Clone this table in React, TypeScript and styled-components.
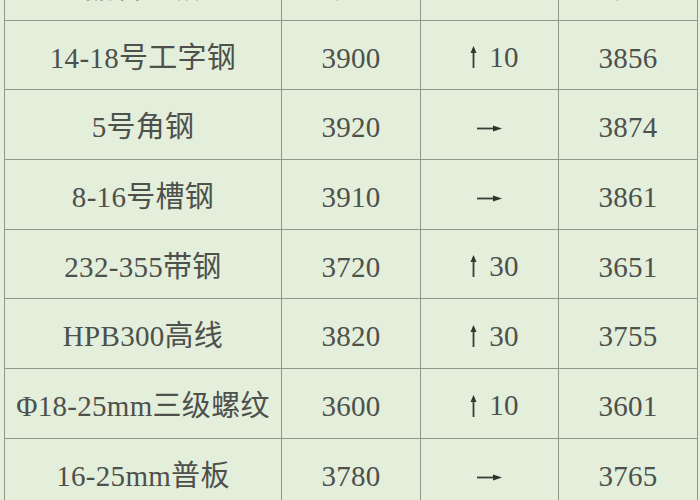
import React from "react";
import styled, { createGlobalStyle } from "styled-components";

const Global = createGlobalStyle`
  html, body { margin: 0; padding: 0; background: #e3eedb; overflow: hidden; }
  body { width: 700px; height: 500px; }
`;

const Page = styled.div`
  width: 700px;
  height: 500px;
  overflow: hidden;
  background: #e3eedb;
  padding-left: 4px;
  box-sizing: border-box;
`;

const Table = styled.table`
  border-collapse: collapse;
  margin-top: -50px;
  table-layout: fixed;
  width: 693px;
  font-family: "Liberation Serif", "Noto Sans CJK SC", serif;
  font-size: 29px;
  color: #4d504b;
`;

const Col = styled.col<{ $w: number }>`
  width: ${(p) => p.$w}px;
`;

const Row = styled.tr`
  height: 69.7px;
`;

const Cell = styled.td`
  border: 1.5px solid #8c9988;
  text-align: center;
  vertical-align: middle;
  padding: 6px 0 0 0;
  white-space: nowrap;
  line-height: 1;
  letter-spacing: 0.3px;
`;

const Change = styled.span`
  display: inline-flex;
  align-items: center;
  gap: 12px;
  margin-left: 10px;
`;

const ArrowSvg = styled.svg`
  display: block;
  flex: none;
`;

const UpArrow = () => (
  <ArrowSvg width="7" height="22" viewBox="0 0 7 22">
    <polygon points="3.5,0 6.5,7 0.5,7" fill="#2f322e" />
    <rect x="2.6" y="5" width="1.8" height="17" fill="#3a3d38" />
  </ArrowSvg>
);

const RightArrow = () => (
  <ArrowSvg width="25" height="7" viewBox="0 0 25 7">
    <rect x="0" y="2.6" width="18" height="1.8" fill="#3a3d38" />
    <polygon points="25,3.5 16,0.5 16,6.5" fill="#2f322e" />
  </ArrowSvg>
);

const FlatWrap = styled.span`
  display: inline-flex;
  align-items: center;
  vertical-align: middle;
  margin-top: -4px;
`;

type Ch = { dir: "up" | "flat"; v?: number };
const rows: { name: string; today: string; ch: Ch; prev: string }[] = [
  { name: "14-18号工字钢", today: "3900", ch: { dir: "up", v: 10 }, prev: "3856" },
  { name: "5号角钢", today: "3920", ch: { dir: "flat" }, prev: "3874" },
  { name: "8-16号槽钢", today: "3910", ch: { dir: "flat" }, prev: "3861" },
  { name: "232-355带钢", today: "3720", ch: { dir: "up", v: 30 }, prev: "3651" },
  { name: "HPB300高线", today: "3820", ch: { dir: "up", v: 30 }, prev: "3755" },
  { name: "Φ18-25mm三级螺纹", today: "3600", ch: { dir: "up", v: 10 }, prev: "3601" },
  { name: "16-25mm普板", today: "3780", ch: { dir: "flat" }, prev: "3765" },
];

export default function App() {
  return (
    <Page>
      <Global />
      <Table>
        <colgroup>
          <Col $w={277} />
          <Col $w={139} />
          <Col $w={138} />
          <Col $w={139} />
        </colgroup>
        <tbody>
          <Row>
            <Cell>品名规格</Cell>
            <Cell>今日</Cell>
            <Cell></Cell>
            <Cell>昨日</Cell>
          </Row>
          {rows.map((r) => (
            <Row key={r.name}>
              <Cell>{r.name}</Cell>
              <Cell>{r.today}</Cell>
              <Cell>
                {r.ch.dir === "up" ? (
                  <Change>
                    <UpArrow />
                    <span>{r.ch.v}</span>
                  </Change>
                ) : (
                  <FlatWrap>
                    <RightArrow />
                  </FlatWrap>
                )}
              </Cell>
              <Cell>{r.prev}</Cell>
            </Row>
          ))}
        </tbody>
      </Table>
    </Page>
  );
}
